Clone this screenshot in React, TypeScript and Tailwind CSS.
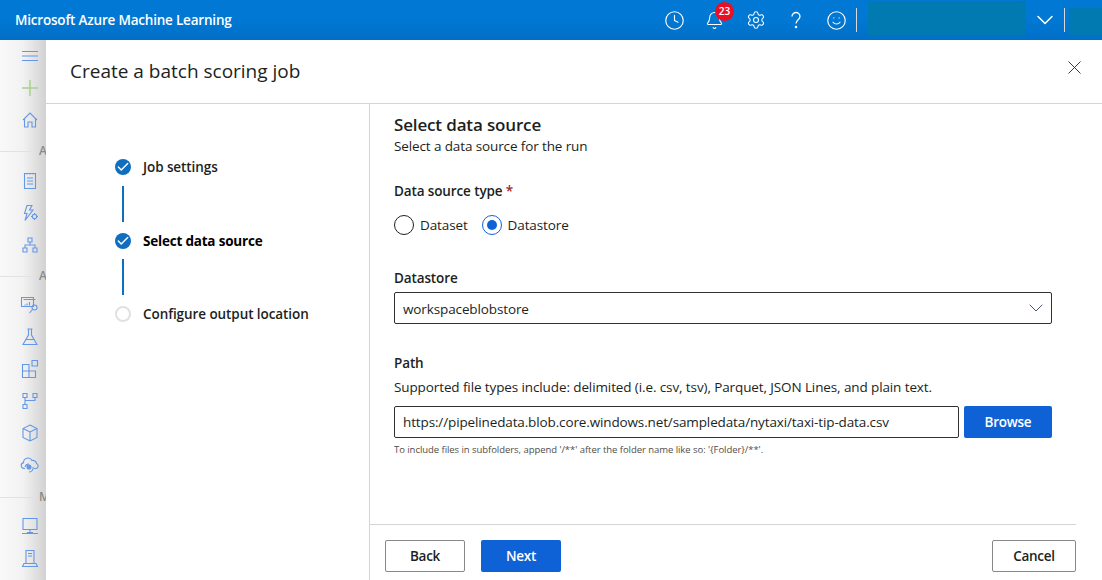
import React from 'react';
import { Bell, Check, ChevronDown, Clock, Settings, Smile, X } from 'lucide-react';

const font = "font-['Open_Sans','Liberation_Sans',sans-serif]";

const RailIcon: React.FC<{ children: React.ReactNode }> = ({ children }) => (
  <div className="h-[32px] w-[34px] flex items-center justify-center shrink-0 ml-[13px]">
    <svg width="20" height="20" viewBox="0 0 20 20" fill="none" stroke="#6497e6" strokeWidth="1.1">
      {children}
    </svg>
  </div>
);

const RailSection: React.FC<{ letter: string; className: string }> = ({ letter, className }) => (
  <div className={`flex items-start w-full shrink-0 ${className}`}>
    <div className="h-px w-[33px] bg-[#e2e2e2] mt-[7px] shrink-0" />
    <span className="ml-[6px] mt-[1px] text-[12px] text-[#8a8a8a] font-semibold leading-none">{letter}</span>
  </div>
);

const Rail = () => (
  <aside className="w-[46px] shrink-0 overflow-hidden flex flex-col items-start bg-gradient-to-r from-[#f9f9f9] via-[#f2f2f2] to-[#d2d2d2]">
    <RailIcon>
      <path d="M2 5.500h16M2 10h16M2 14.500h16" />
    </RailIcon>
    <RailIcon>
      <path d="M10 2v16M2 10h16" stroke="#a9d18e" strokeWidth="1.5" />
    </RailIcon>
    <RailIcon>
      <path d="M3 10 10 3l7 7M4.500 8.500V17H8v-5h4v5h3.500V8.500" />
    </RailIcon>
    <RailSection letter="A" className="h-[29px] pt-[8px]" />
    <RailIcon>
      <path d="M4.500 2.500h11v15h-11zM7 2v1.500M10 2v1.500M13 2v1.500M7 7h6M7 10h6M7 13h6" />
    </RailIcon>
    <RailIcon>
      <path d="M7 2.500h5L9.500 7H13L5 17.500l2-7H4.500z" />
      <circle cx="14.500" cy="13.500" r="2.200" />
      <path d="M14.500 10v1.300M14.500 15.700V17M11 13.500h1.300M16.700 13.500H18" />
    </RailIcon>
    <RailIcon>
      <path d="M8 3h4v4H8zM3 13h4v4H3zM13 13h4v4h-4zM10 7v3M5 13v-3h10v3" />
    </RailIcon>
    <RailSection letter="A" className="h-[28px] pt-[8px]" />
    <RailIcon>
      <path d="M1.500 2.500h12v9h-12zM3.500 4.500h12M7 8.500v2M9.500 7v3.500M5 9.500v1" />
      <circle cx="14.500" cy="12.500" r="2.500" />
      <path d="M12.500 14.500 9.500 18" />
    </RailIcon>
    <RailIcon>
      <path d="M7.500 2h5M8.500 2v6L3 17.500h14L11.500 8V2M6 12.500h8" />
    </RailIcon>
    <RailIcon>
      <path d="M2.500 5.500h6.500V12H2.500zM9 12h6.500v6.500H9zM2.500 12H9v6.500H2.500zM12 1.500h5.500V7H12z" />
    </RailIcon>
    <RailIcon>
      <path d="M3 2.500h4v4H3zM13 2.500h4v4h-4zM3 13.500h4v4H3zM5 6.500v7M5 9.500h10v-3" />
    </RailIcon>
    <RailIcon>
      <path d="m10 2 7 3.500v9L10 18l-7-3.500v-9zM3 5.500 10 9l7-3.500M10 9v9" />
    </RailIcon>
    <RailIcon>
      <path d="M5 13.500H4A3 3 0 0 1 3.500 7.600 4.500 4.500 0 0 1 12 5.500a3.500 3.500 0 0 1 4.500 3 2.700 2.700 0 0 1 0 5H14" />
      <circle cx="9" cy="12" r="2" fill="#6497e6" />
      <path d="M5 12a4 4 0 0 1 4-3M13 12a4 4 0 0 1-4 5" />
    </RailIcon>
    <RailSection letter="M" className="h-[29px] pt-[9px]" />
    <RailIcon>
      <path d="M3 2.500h14v11H3zM10 13.500v3M2 17.500h16M7 16.500h6" />
    </RailIcon>
    <RailIcon>
      <path d="M6 2.500h8v13H6zM8 5.500h4M8 8h4M2.500 18.500h15L16 15.500H4z" />
    </RailIcon>
  </aside>
);

const Step: React.FC<{ label: string; state: 'done' | 'current' | 'todo' }> = ({ label, state }) => (
  <div className="flex items-center h-[20px]">
    {state === 'todo' ? (
      <div className="w-[16px] h-[16px] rounded-full border-2 border-[#e1e1e1]" />
    ) : (
      <div className="w-[16px] h-[16px] rounded-full bg-[#106ebe] flex items-center justify-center">
        <Check size={14} strokeWidth={2.5} className="text-white" />
      </div>
    )}
    <span
      className={`ml-[12px] text-[13.5px] ${
        state === 'current' ? 'font-bold text-black tracking-[-0.2px]' : 'font-semibold text-[#201f1e] tracking-[-0.08px]'
      }`}
    >
      {label}
    </span>
  </div>
);

const Radio: React.FC<{ label: string; checked?: boolean }> = ({ label, checked }) => (
  <label className="flex items-center gap-[6px] text-[13.5px] tracking-[-0.12px] text-[#201f1e]">
    <span
      className={`w-[20px] h-[20px] rounded-full border-[1.5px] flex items-center justify-center ${
        checked ? 'border-[#0f62d6]' : 'border-[#201f1e]'
      }`}
    >
      {checked && <span className="w-[10px] h-[10px] rounded-full bg-[#0f62d6]" />}
    </span>
    {label}
  </label>
);

export default function App() {
  return (
    <div className={`h-[580px] w-full overflow-hidden flex flex-col bg-white ${font}`}>
      <header className="h-[40px] shrink-0 flex items-center bg-gradient-to-b from-[#0078d4] via-[#0078d4] to-[#006fc6] text-white">
        <span className="ml-[15px] text-[13.5px] font-semibold tracking-[-0.2px]">Microsoft Azure Machine Learning</span>
        <div className="ml-auto flex items-center h-full">
          <div className="w-[40px] h-full flex items-center justify-center">
            <Clock size={21} strokeWidth={1.3} />
          </div>
          <div className="relative w-[40px] h-full flex items-center justify-center">
            <Bell size={19} strokeWidth={1.3} />
            <span className="absolute top-[2px] left-[21px] w-[19px] h-[19px] rounded-full bg-[#e81123] text-[10px] font-semibold flex items-center justify-center">
              23
            </span>
          </div>
          <div className="ml-[2px] w-[40px] h-full flex items-center justify-center">
            <Settings size={20} strokeWidth={1.3} />
          </div>
          <div className="w-[39px] h-full flex items-center justify-center">
            <svg width="18" height="18" viewBox="0 0 18 18" fill="none" stroke="currentColor" strokeWidth="1.3">
              <path d="M5 5.500A4 4 0 0 1 9 1.500a4 4 0 0 1 4 4c0 3-4 3.500-4 7" />
              <circle cx="9" cy="16" r="0.6" fill="currentColor" />
            </svg>
          </div>
          <div className="ml-[1px] w-[40px] h-full flex items-center justify-center">
            <Smile size={21} strokeWidth={1.3} />
          </div>
          <div className="w-px h-[24px] bg-[#d8d8d8]" />
          <div className="w-[158px] h-[34px] bg-[#007ab0] ml-[11px] self-start mt-[1px]" />
          <div className="w-[38px] h-full flex items-center justify-center">
            <ChevronDown size={28} strokeWidth={1.3} />
          </div>
          <div className="w-px h-[24px] bg-[#d8d8d8]" />
          <div className="w-[33px] h-[27px] bg-[#007ab0] ml-[4px] self-start mt-[8px]" />
        </div>
      </header>
      <div className="flex-1 flex min-h-0">
        <Rail />
        <main className="flex-1 flex flex-col min-w-0 bg-white">
          <div className="h-[64px] shrink-0 border-b border-[#d4d4d4] flex items-center justify-between pl-[24px] pr-[16px]">
            <h1 className="text-[19px] text-[#201f1e]">Create a batch scoring job</h1>
            <X size={23} strokeWidth={1} className="text-[#323130] mb-[8px]" />
          </div>
          <div className="flex-1 flex min-h-0">
            <nav className="w-[324px] shrink-0 border-r border-[#d4d4d4] pl-[69px] pt-[53px]">
              <Step label="Job settings" state="done" />
              <div className="w-[2px] h-[36px] bg-[#106ebe] ml-[7px] mt-[9px] mb-[9px]" />
              <Step label="Select data source" state="current" />
              <div className="w-[2px] h-[36px] bg-[#106ebe] ml-[7px] mt-[8px] mb-[9px]" />
              <Step label="Configure output location" state="todo" />
            </nav>
            <section className="flex-1 flex flex-col min-w-0">
              <div className="flex-1 pl-[24px] pr-[50px] pt-[9px]">
                <h2 className="text-[17px] leading-[23px] font-semibold tracking-[-0.15px] text-[#201f1e]">Select data source</h2>
                <p className="text-[13.5px] leading-[20px] tracking-[-0.12px] text-[#201f1e]">Select a data source for the run</p>
                <div className="mt-[25px] text-[13.5px] leading-[20px] font-semibold tracking-[-0.12px] text-[#201f1e]">
                  Data source type <span className="text-[#a4262c]">*</span>
                </div>
                <div className="mt-[14px] flex items-center gap-[14px]">
                  <Radio label="Dataset" />
                  <Radio label="Datastore" checked />
                </div>
                <div className="mt-[33px] text-[13.5px] leading-[20px] font-semibold tracking-[-0.12px] text-[#201f1e]">Datastore</div>
                <div className="mt-[4px] h-[32px] border border-[#323130] rounded-[2px] flex items-center justify-between pl-[8px] pr-[3px] text-[13.5px] tracking-[-0.12px] text-[#201f1e]">
                  <span className="pt-[1px]">workspaceblobstore</span>
                  <ChevronDown size={24} strokeWidth={1} className="text-[#44546a]" />
                </div>
                <div className="mt-[29px] text-[13.5px] leading-[20px] font-semibold tracking-[-0.12px] text-[#201f1e]">Path</div>
                <p className="mt-[4px] text-[13.5px] leading-[20px] tracking-[-0.11px] text-[#201f1e]">
                  Supported file types include: delimited (i.e. csv, tsv), Parquet, JSON Lines, and plain text.
                </p>
                <div className="mt-[9px] flex gap-[5px]">
                  <div className="flex-1 h-[32px] border border-[#323130] rounded-[2px] flex items-center pl-[8px] text-[13.5px] tracking-[-0.13px] text-[#201f1e]">
                    https://pipelinedata.blob.core.windows.net/sampledata/nytaxi/taxi-tip-data.csv
                  </div>
                  <button className="w-[88px] h-[32px] rounded-[2px] bg-[#0f62d6] text-white text-[13.5px] font-semibold tracking-[-0.25px]">Browse</button>
                </div>
                <p className="mt-[5px] text-[9.5px] leading-[14px] tracking-[-0.05px] text-[#4f4d4b]">
                  To include files in subfolders, append '/**' after the folder name like so: '{'{'}Folder{'}'}/**'.
                </p>
              </div>
              <div className="mr-[26px] border-t border-[#d4d4d4] h-[56px] shrink-0 pl-[15px] flex items-start pt-[15px] gap-[16px]">
                <button className="w-[80px] h-[32px] border border-[#8a8886] rounded-[2px] text-[13.5px] font-semibold tracking-[-0.25px] text-[#201f1e]">Back</button>
                <button className="w-[80px] h-[32px] rounded-[2px] bg-[#0f62d6] text-white text-[13.5px] font-semibold tracking-[-0.25px]">Next</button>
                <button className="ml-auto w-[84px] h-[32px] border border-[#8a8886] rounded-[2px] text-[13.5px] font-semibold tracking-[-0.25px] text-[#201f1e]">Cancel</button>
              </div>
            </section>
          </div>
        </main>
      </div>
    </div>
  );
}
